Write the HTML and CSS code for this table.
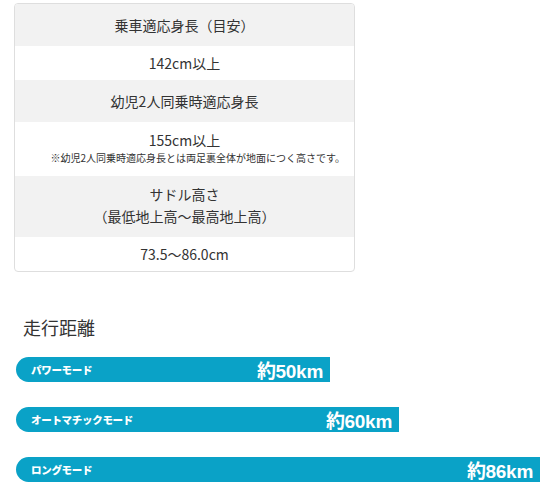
FILE: index.html
```html
<!DOCTYPE html>
<html lang="ja">
  <head>
    <meta charset="UTF-8" />
    <meta name="viewport" content="width=device-width, initial-scale=1.0" />
    <title>スペック</title>
    <link rel="stylesheet" href="styles.css">
  </head>
  <body>
    <div class="spec">
      <div class="row head">乗車適応身長（目安）</div>
      <div class="row">142cm以上</div>
      <div class="row head">幼児2人同乗時適応身長</div>
      <div class="row with-note">
        155cm以上
        <p class="note">※幼児2人同乗時適応身長とは両足裏全体が地面につく高さです。</p>
      </div>
      <div class="row head tall">サドル高さ<br />（最低地上高～最高地上高）</div>
      <div class="row">73.5～86.0cm</div>
    </div>

    <div class="range">
      <h2>走行距離</h2>
      <ul class="bars">
        <li class="bar" style="width: 314px"><span class="mode">パワーモード</span><span class="km">約50km</span></li>
        <li class="bar" style="width: 383px"><span class="mode">オートマチックモード</span><span class="km">約60km</span></li>
        <li class="bar" style="width: 524px"><span class="mode">ロングモード</span><span class="km">約86km</span></li>
      </ul>
    </div>
  </body>
</html>
```

FILE: styles.css
```css
* {
  margin: 0;
  padding: 0;
}
body {
  background: #fff;
  color: #333;
  font-family: "Noto Sans CJK JP", "Noto Sans", sans-serif;
}
.spec {
  width: 339px;
  margin: 3px 0 0 14px;
  border: 1px solid #dedede;
  border-radius: 4px;
  overflow: hidden;
}
.row {
  padding: 7px 0;
  font-size: 14px;
  line-height: 20px;
  text-align: center;
}
.head {
  background-color: #f2f2f2;
  padding: 11px 0;
}
.with-note {
  padding: 8px 0 10px;
}
.note {
  font-size: 10px;
  line-height: 16px;
  text-align: right;
  padding-right: 9px;
}
.tall {
  padding: 7px 0 10px;
  line-height: 22px;
}
.range {
  margin: 43px 0 0 16px;
}
h2 {
  font-size: 18px;
  font-weight: normal;
  line-height: 24px;
  margin-left: 7px;
  margin-bottom: 18px;
}
.bars {
  list-style: none;
  display: flex;
  flex-direction: column;
  gap: 25px;
}
.bar {
  height: 25px;
  display: flex;
  align-items: center;
  justify-content: space-between;
  background-color: #0aa2c7;
  border-radius: 13px 0 0 13px;
  color: #fff;
  font-weight: bold;
}
.mode {
  font-size: 10.5px;
  font-weight: 900;
  letter-spacing: -0.3px;
  padding-left: 15px;
}
.km {
  font-family: "Liberation Sans", "Noto Sans CJK JP", sans-serif;
  font-size: 19px;
  letter-spacing: -0.3px;
  padding-right: 7px;
}
```
